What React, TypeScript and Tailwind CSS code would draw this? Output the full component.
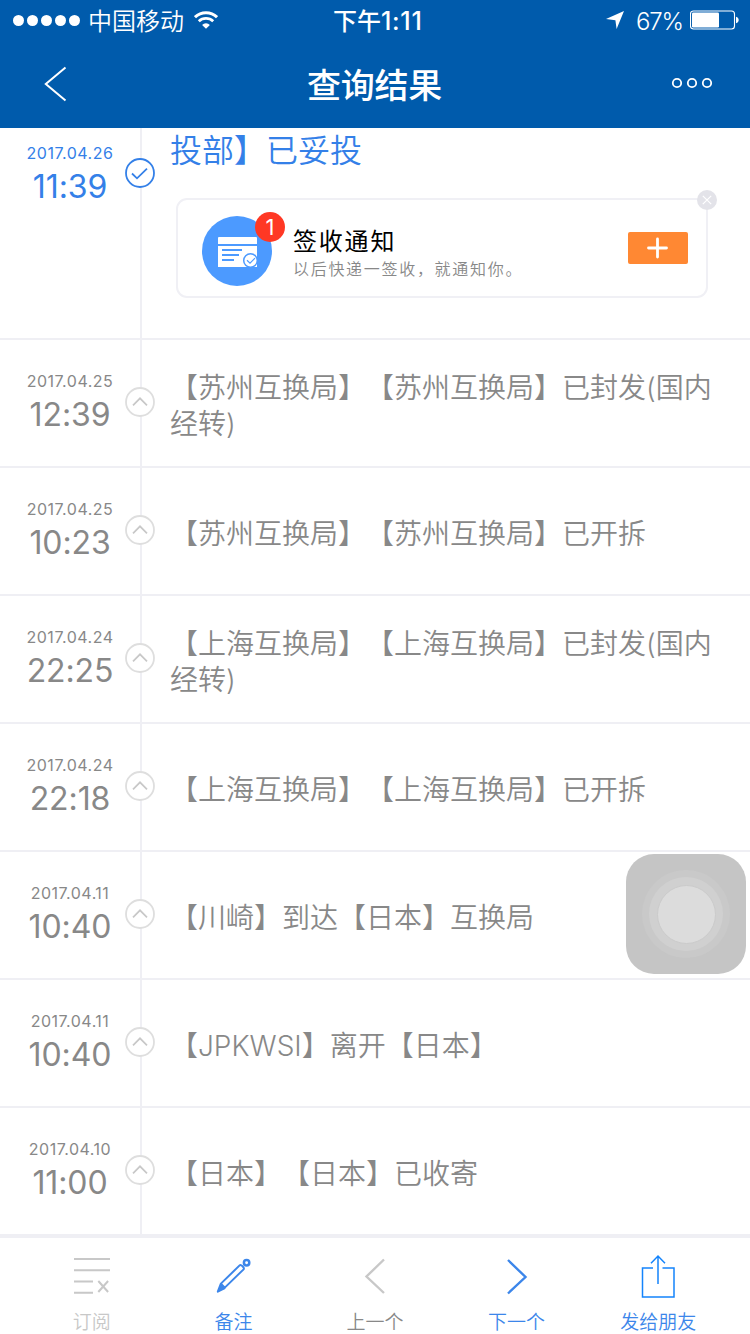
import { clsx } from 'clsx';

const events = [
  { date: '2017.04.25', time: '12:39', text: '【苏州互换局】【苏州互换局】已封发(国内经转)' },
  { date: '2017.04.25', time: '10:23', text: '【苏州互换局】【苏州互换局】已开拆' },
  { date: '2017.04.24', time: '22:25', text: '【上海互换局】【上海互换局】已封发(国内经转)' },
  { date: '2017.04.24', time: '22:18', text: '【上海互换局】【上海互换局】已开拆' },
  { date: '2017.04.11', time: '10:40', text: '【川崎】到达【日本】互换局' },
  { date: '2017.04.11', time: '10:40', text: '【JPKWSI】离开【日本】' },
  { date: '2017.04.10', time: '11:00', text: '【日本】【日本】已收寄' },
];

function StatusBar() {
  return (
    <div className="flex h-10 items-center pl-[13px] pr-[11px] text-2xl leading-10">
      <div className="flex w-[320px] items-center">
        <div className="flex gap-[3px]">
          {[0, 1, 2, 3, 4].map(i => (
            <span key={i} className="size-[11px] rounded-full bg-white" />
          ))}
        </div>
        <span className="ml-2 pt-[3px] font-[350]">中国移动</span>
        <svg className="ml-[10px] h-[18px] w-6" viewBox="0 0 24 18" fill="none" stroke="#fff">
          <path d="M1 6.2a16 16 0 0 1 22 0" strokeWidth="3" />
          <path d="M4.8 10.3a10.5 10.5 0 0 1 14.4 0" strokeWidth="2.8" />
          <path d="M12 17.8 8.1 13.9a5.6 5.6 0 0 1 7.8 0z" fill="#fff" stroke="none" />
        </svg>
      </div>
      <span className="pt-[3px] font-medium">
        下午<span className="text-[25px] tracking-[0.7px]">1:11</span>
      </span>
      <div className="ml-auto flex items-center">
        <svg className="mr-3 h-[18px] w-[18px]" viewBox="0 0 18 18" fill="#fff">
          <path d="M18 0 10.6 18 9.4 9.3 0 7.9z" />
        </svg>
        <span className="pt-[3px] tracking-[-1.1px] font-[350]">67%</span>
        <svg className="ml-[7px] h-5 w-[49px]" viewBox="0 0 49 20" fill="none">
          <rect x="0.5" y="1" width="44" height="18" rx="3" stroke="#fff" strokeWidth="1.1" />
          <rect x="2" y="2.6" width="27" height="14.8" rx="1.2" fill="#fff" />
          <path d="M46 6.8c3.6.6 3.6 5.8 0 6.4z" fill="#fff" />
        </svg>
      </div>
    </div>
  );
}

function NavBar() {
  return (
    <div className="flex h-[88px] items-center justify-between pl-11 pr-[37px]">
      <svg className="h-9 w-6" viewBox="0 0 24 36" fill="none" stroke="#fff" strokeWidth="2">
        <path d="M21.5 1.5 1.8 18l19.7 16.5" />
      </svg>
      <h1 className="ml-2.5 pt-[3px] text-[34px] font-medium leading-none tracking-[-0.2px]">查询结果</h1>
      <svg className="-mt-0.5 h-3 w-[42px]" viewBox="0 0 42 12" fill="none" stroke="#fff" strokeWidth="1.8">
        <circle cx="6" cy="6" r="4.2" />
        <circle cx="21" cy="6" r="4.2" />
        <circle cx="36" cy="6" r="4.2" />
      </svg>
    </div>
  );
}

function TimeColumn({ date, time, first }: { date: string; time: string; first?: boolean }) {
  return (
    <div className={clsx('flex w-[140px] shrink-0 flex-col items-center', first ? 'pt-[15px]' : 'pt-[31px]')}>
      <span className="text-base leading-5 tracking-[0.5px]">{date}</span>
      <span className="mt-1 text-[32px] leading-10 tracking-[-0.1px]">{time}</span>
    </div>
  );
}

function Rail({ first }: { first?: boolean }) {
  return (
    <div className="relative w-0.5 shrink-0 bg-[#efeff4]">
      <svg
        className={clsx('absolute -left-[15px] size-[30px]', first ? 'top-[30px]' : 'top-[47px]')}
        viewBox="0 0 30 30"
        fill="none"
      >
        {first ? (
          <>
            <circle cx="15" cy="15" r="14" fill="#fff" stroke="#3480e8" strokeWidth="1.8" />
            <path d="m7 15.5 5 4.8 10-9.6" stroke="#3480e8" strokeWidth="1.8" />
          </>
        ) : (
          <>
            <circle cx="15" cy="15" r="14" fill="#fff" stroke="#dedede" strokeWidth="1.8" />
            <path d="m8 18.3 7-7 7 7" stroke="#c8c8c8" strokeWidth="1.7" />
          </>
        )}
      </svg>
    </div>
  );
}

function NoticeCard() {
  return (
    <div className="relative mt-7 ml-1.5 flex h-[100px] w-[532px] items-center rounded-[11px] border-2 border-[#f0f0f5] pl-6 pr-[18px]">
      <div className="relative mt-1.5 size-[70px] rounded-full bg-[#4c9aff]">
        <svg className="size-[70px]" viewBox="0 0 70 70" fill="none">
          <path d="M16 28v-6a1 1 0 0 1 1-1h37a1 1 0 0 1 1 1v6zM16 30h39v21H16z" fill="#fff" />
          <path d="M20 34h20M20 39h17M20 44h12" stroke="#4c9aff" strokeWidth="2" />
          <circle cx="48.5" cy="44.5" r="6.8" fill="#fff" stroke="#4c9aff" strokeWidth="1.5" />
          <path d="m45 44.3 3 2.8 5-5" stroke="#4c9aff" strokeWidth="1.2" />
        </svg>
        <span className="absolute -top-1 left-[53px] flex size-[30px] items-center justify-center rounded-full bg-[#ff3824] text-[22px] leading-none text-white">
          1
        </span>
      </div>
      <div className="ml-[21px] flex flex-col pt-3">
        <span className="text-2xl leading-[30px] tracking-[1.8px] text-black">签收通知</span>
        <span className="text-base leading-[25px] tracking-[1.7px] font-[350] text-[#888]">以后快递一签收，就通知你。</span>
      </div>
      <button className="ml-auto flex h-8 w-[60px] items-center justify-center rounded-xs bg-[#ff8833]">
        <svg className="size-[22px]" viewBox="0 0 22 22" stroke="#fff" strokeWidth="2.8" strokeLinecap="round">
          <path d="M10.5 2v18M1.5 11h18" />
        </svg>
      </button>
      <svg className="absolute -right-[11px] -top-2.5 size-5" viewBox="0 0 20 20" fill="none">
        <circle cx="10" cy="10" r="10" fill="#e3e3e9" />
        <path d="m5.8 5.8 8.4 8.4m0-8.4-8.4 8.4" stroke="#fff" strokeWidth="1.2" />
      </svg>
    </div>
  );
}

function AssistiveButton() {
  return (
    <div className="absolute left-[626px] top-[854px] flex size-[120px] items-center justify-center rounded-[28px] bg-[#c5c5c5]">
      <div className="flex size-[88px] items-center justify-center rounded-full bg-[#c9c9c9]">
        <div className="flex size-[74px] items-center justify-center rounded-full bg-[#d0d0d0]">
          <div className="size-[59px] rounded-full border border-[#cbcbcb] bg-[#dcdcdc]" />
        </div>
      </div>
    </div>
  );
}

const tabs = [
  {
    label: '订阅',
    color: 'text-[#c8c8c8]',
    icon: (
      <g stroke="#c8c8c8" strokeWidth="2">
        <path d="M4 5h36M4 16.3h36M4 27.5h19M4 38.7h19M28.3 27l9.8 11M38.1 27l-9.8 11" />
      </g>
    ),
  },
  {
    label: '备注',
    color: 'text-[#3c86ea]',
    icon: (
      <g stroke="#3c86ea" strokeWidth="2" strokeLinejoin="round">
        <path d="M9.9 29.6 28.6 11.4c1.4-1.3 5.2 2.4 4 4L13.8 33.6z" />
        <path d="M9.5 30.5 6.8 37.7l6.6-3.3z" fill="#3c86ea" />
        <circle cx="35.6" cy="8.8" r="2.7" strokeWidth="2.5" />
      </g>
    ),
  },
  {
    label: '上一个',
    color: 'text-[#888]',
    icon: <path d="M31 5.5 13.5 22.5 31 39" stroke="#c8c8c8" strokeWidth="2.4" />,
  },
  {
    label: '下一个',
    color: 'text-[#3c86ea]',
    icon: <path d="m13 6 17.5 17L13 39.5" stroke="#3c86ea" strokeWidth="2.4" />,
  },
  {
    label: '发给朋友',
    color: 'text-[#3c86ea]',
    icon: (
      <g stroke="#1484fc" strokeWidth="1.5">
        <path d="M17 14H6.5v29h31.5V14H26.5M22 30V2.5M15 9.3l7-7.2 7 7.2" />
      </g>
    ),
  },
];

export default function App() {
  return (
    <div className="relative flex h-[1334px] w-[750px] flex-col overflow-hidden bg-white font-['Inter','Noto_Sans_CJK_SC',sans-serif] text-[#888] [text-spacing-trim:space-all]">
      <header className="h-[128px] bg-[#005bac] text-white">
        <StatusBar />
        <NavBar />
      </header>

      <main className="flex-1">
        <div className="flex h-[212px] border-b-2 border-[#efeff4] text-[#3480e8]">
          <TimeColumn date="2017.04.26" time="11:39" first />
          <Rail first />
          <div className="pl-7">
            <p className="pt-[3px] text-[32px] font-[350] leading-[39px]">投部】已妥投</p>
            <NoticeCard />
          </div>
        </div>

        {events.map((event, idx) => (
          <div
            key={idx}
            className={clsx('flex', idx === events.length - 1 ? 'h-[126px]' : 'h-[128px] border-b-2 border-[#efeff4]')}
          >
            <TimeColumn date={event.date} time={event.time} />
            <Rail />
            <p className="w-[580px] self-center pl-7 pr-2.5 pt-1.5 text-[28px] font-[350] leading-9">{event.text}</p>
          </div>
        ))}
      </main>

      <nav className="flex h-[100px] border-t-4 border-[#efeff4] px-[21px]">
        {tabs.map(tab => (
          <div key={tab.label} className="flex flex-1 flex-col items-center pt-4">
            <svg className="h-11 w-11 shrink-0" viewBox="0 0 44 44" fill="none">
              {tab.icon}
            </svg>
            <span className={clsx('mt-[15px] text-[19px] font-[350] leading-5', tab.color)}>{tab.label}</span>
          </div>
        ))}
      </nav>

      <AssistiveButton />
    </div>
  );
}
